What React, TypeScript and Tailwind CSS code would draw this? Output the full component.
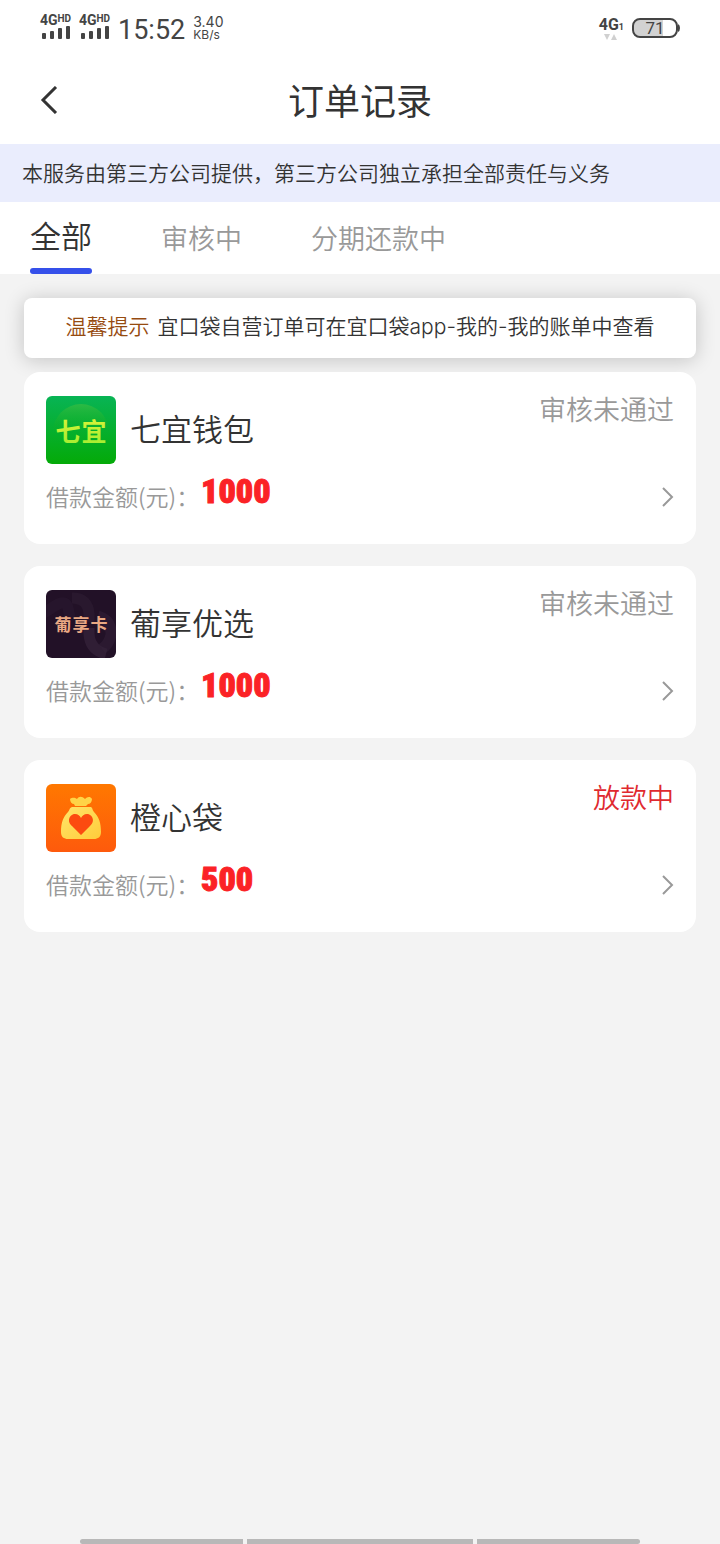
import type { ReactNode } from 'react';

interface Order {
  id: number;
  name: string;
  amount: number;
  status: string;
  statusClass: string;
  logo: ReactNode;
}

function QiyiLogo() {
  return (
    <svg width="70" height="68" viewBox="0 0 70 68" className="rounded-md" aria-hidden="true">
      <defs>
        <linearGradient id="qiyi-bg" x1="0" y1="0" x2="0" y2="1">
          <stop offset="0" stopColor="#08b455" />
          <stop offset="1" stopColor="#04aa08" />
        </linearGradient>
        <linearGradient id="qiyi-circle" x1="0" y1="0" x2="0" y2="1">
          <stop offset="0" stopColor="#2cba45" />
          <stop offset="0.5" stopColor="#10ae1c" stopOpacity="0" />
        </linearGradient>
        <linearGradient id="qiyi-text" x1="0" y1="0" x2="0" y2="1">
          <stop offset="0" stopColor="#e4f53a" />
          <stop offset="1" stopColor="#9fec30" />
        </linearGradient>
      </defs>
      <rect width="70" height="68" fill="url(#qiyi-bg)" />
      <circle cx="35" cy="36" r="28" fill="url(#qiyi-circle)" />
      <text x="22 48" y="45" textAnchor="middle" fontSize="25" fontWeight="700" fill="url(#qiyi-text)">
        七宜
      </text>
    </svg>
  );
}

function PuxiangLogo() {
  return (
    <svg width="70" height="68" viewBox="0 0 70 68" className="rounded-md" aria-hidden="true">
      <rect width="70" height="68" fill="#221127" />
      <g fill="none" stroke="#34223a" strokeWidth="11">
        <path d="M-4 24 12 14q8-4 10 4l2 10" strokeOpacity="0.25" />
        <path d="M26 8q16 0 17 16v8" strokeOpacity="0.4" />
        <path d="M43 38v6q1 16 17 20" strokeOpacity="0.8" />
        <path d="M52 26q14 4 13 19-2 9-9 14" strokeOpacity="0.5" />
      </g>
      <text x="17 35 53" y="41" textAnchor="middle" fontSize="17" fontWeight="700" fill="#e9a883">
        葡享卡
      </text>
    </svg>
  );
}

function OrangeBagLogo() {
  return (
    <svg width="70" height="68" viewBox="0 0 70 68" className="rounded-md" aria-hidden="true">
      <defs>
        <linearGradient id="orange-bg" x1="0" y1="0" x2="0" y2="1">
          <stop offset="0" stopColor="#ff7800" />
          <stop offset="1" stopColor="#fe5a0c" />
        </linearGradient>
        <linearGradient id="orange-bag" x1="0" y1="0" x2="1" y2="1">
          <stop offset="0" stopColor="#ffe56a" />
          <stop offset="1" stopColor="#ffcc3a" />
        </linearGradient>
      </defs>
      <rect width="70" height="68" fill="url(#orange-bg)" />
      <path
        d="M24 15c3-2 5-1 7 0 2-3 5-3 8 0 2-2 5-3 7 0 0 3-2 5-4 5l-2 2H29l-1-2c-2 0-4-2-4-5Z"
        fill="#ffd447"
      />
      <path
        d="M26 23h19c2 1 1 3 3 5 5 5 7 11 7 20 0 5-3 7-7 7H22c-4 0-7-2-7-7 0-9 2-15 7-20 2-2 1-4 4-5Z"
        fill="url(#orange-bag)"
      />
      <path
        d="M35 51 26 42c-6-5-2-12 3-12 3 0 5 2 6 4 1-2 3-4 6-4 5 0 9 7 3 12Z"
        fill="#fc4b10"
      />
    </svg>
  );
}

const tabs = ['全部', '审核中', '分期还款中'];

const orders: Order[] = [
  { id: 1, name: '七宜钱包', amount: 1000, status: '审核未通过', statusClass: 'text-[#999]', logo: <QiyiLogo /> },
  { id: 2, name: '葡享优选', amount: 1000, status: '审核未通过', statusClass: 'text-[#999]', logo: <PuxiangLogo /> },
  { id: 3, name: '橙心袋', amount: 500, status: '放款中', statusClass: 'text-[#e02a2f]', logo: <OrangeBagLogo /> },
];

function Signal() {
  return (
    <div className="flex w-[31px] flex-col items-center pb-1">
      <span className="flex items-start font-['Roboto'] text-[14px] leading-3 font-bold">
        4G<span className="text-[10px] leading-[9px]">HD</span>
      </span>
      <svg width="28" height="13" viewBox="0 0 28 13" fill="currentColor" aria-hidden="true">
        <rect y="7" width="4" height="6" rx="1" />
        <rect x="8" y="5" width="4" height="8" rx="1" />
        <rect x="16" y="2" width="4" height="11" rx="1" />
        <rect x="24" width="4" height="13" rx="1" />
      </svg>
    </div>
  );
}

function StatusBar() {
  return (
    <div className="flex h-14 items-center justify-between px-10 text-[#444]">
      <div className="flex items-center gap-2">
        <Signal />
        <Signal />
        <span className="pt-1 font-['Roboto'] text-[27px] leading-8 font-normal">15:52</span>
        <span className="flex flex-col font-['Inter'] leading-[13px] font-normal">
          <span className="text-[14px]">3.40</span>
          <span className="text-[12px]">KB/s</span>
        </span>
      </div>
      <div className="flex items-center gap-2">
        <div className="flex flex-col items-center">
          <span className="flex items-end font-['Roboto'] text-[16px] leading-4 font-bold">
            4G<span className="text-[9px] leading-3">1</span>
          </span>
          <svg width="14" height="7" viewBox="0 0 14 7" fill="#d0d0d0" aria-hidden="true">
            <path d="M0 1h6L3 7ZM7 7h6l-3-6Z" />
          </svg>
        </div>
        <svg width="48" height="20" viewBox="0 0 48 20" role="img" aria-label="71%">
          <path d="M8 2h23v16H8a6 6 0 0 1-6-6V8a6 6 0 0 1 6-6Z" fill="#d2d2d2" />
          <rect x="1" y="1" width="44" height="18" rx="7" fill="none" stroke="#444" strokeWidth="2" />
          <path d="M46 6q2 1 2 4t-2 4Z" fill="#444" />
          <text x="23" y="16" textAnchor="middle" fontFamily="Roboto" fontSize="17" fontWeight="400" fill="#444">
            71
          </text>
        </svg>
      </div>
    </div>
  );
}

function OrderCard({ order }: { order: Order }) {
  return (
    <a href="#" className="block h-[172px] rounded-2xl bg-white px-[22px] pt-6">
      <div className="flex h-[68px] items-start">
        {order.logo}
        <h2 className="ml-[14px] flex-1 text-[31px] leading-[64px] text-[#333]">{order.name}</h2>
        <span className={`text-[27px] leading-[26px] ${order.statusClass}`}>{order.status}</span>
      </div>
      <div className="flex items-center pt-1">
        <span className="w-[155px] pt-[10px] text-[23px] leading-8 text-[#999]">借款金额(元)：</span>
        <span className="flex-1 font-['Roboto_Condensed','Liberation_Sans',sans-serif] text-[34px] leading-[46px] font-black text-[#fb2226] [-webkit-text-stroke:1px_#fb2226]">
          {order.amount}
        </span>
        <svg width="12" height="20" viewBox="0 0 12 20" fill="none" stroke="#999" strokeWidth="2" className="mt-3" aria-hidden="true">
          <path d="m1 1 9 9-9 9" />
        </svg>
      </div>
    </a>
  );
}

export default function App() {
  return (
    <div className="flex min-h-screen flex-col bg-[#f3f3f3] font-['Noto_Sans_CJK_SC',sans-serif] font-[350]">
      <div className="bg-white">
        <StatusBar />
        <header className="flex h-[88px] items-center px-10">
          <button type="button" aria-label="返回" className="w-10">
            <svg width="18" height="28" viewBox="0 0 18 28" fill="none" stroke="#333" strokeWidth="3" aria-hidden="true">
              <path d="M16 1 3 14l13 13" />
            </svg>
          </button>
          <h1 className="flex-1 pb-0.5 text-center text-[36px] font-normal text-[#333]">订单记录</h1>
          <div className="w-10" />
        </header>
        <p className="bg-[#eaedfd] px-[22px] pb-0.5 text-[21px] leading-[56px] text-[#333]">
          本服务由第三方公司提供，第三方公司独立承担全部责任与义务
        </p>
        <nav className="flex h-[72px] gap-[69px] px-[30px]">
          {tabs.map((tab, index) => (
            <button
              key={tab}
              type="button"
              className={
                index === 0
                  ? 'flex flex-col justify-between text-[31px] leading-[66px] text-[#333]'
                  : 'text-[27px] leading-[72px] text-[#999]'
              }
            >
              {tab}
              {index === 0 && <span className="h-1.5 w-full rounded-full bg-[#3550ea]" />}
            </button>
          ))}
        </nav>
      </div>

      <main className="px-6 pt-6">
        <p className="mb-[14px] rounded-lg bg-white pb-0.5 text-center font-['Inter','Noto_Sans_CJK_SC',sans-serif] text-[21px] leading-[58px] text-[#333] shadow-[0_2px_20px_rgba(0,0,0,0.2)]">
          <span className="mr-2 text-[#964b10]">温馨提示</span>
          宜口袋自营订单可在宜口袋app-我的-我的账单中查看
        </p>
        <div className="relative flex flex-col gap-[22px]">
          {orders.map((order) => (
            <OrderCard key={order.id} order={order} />
          ))}
        </div>
      </main>

      {/* gesture bar */}
      <div className="mt-auto flex h-[5px] gap-1 px-20">
        <div className="flex-[163] rounded-l-full bg-[#b8b8b8]" />
        <div className="flex-[226] bg-[#b8b8b8]" />
        <div className="flex-[163] rounded-r-full bg-[#b8b8b8]" />
      </div>
    </div>
  );
}
